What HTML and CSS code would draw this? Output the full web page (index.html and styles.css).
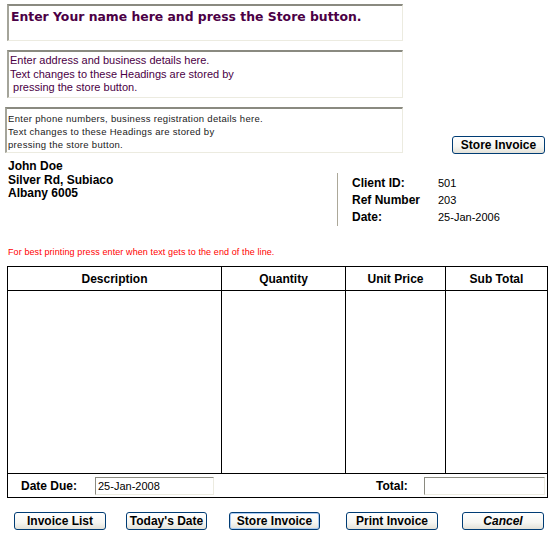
FILE: index.html
```html
<!DOCTYPE html>
<html lang="en">
<head>
    <meta charset="UTF-8">
    <title>Invoice</title>
    <link rel="stylesheet" href="styles.css">
</head>
<body>
    <!-- heading boxes + store button -->
    <div class="top">
        <div class="headings">
            <div class="box box-name">Enter Your name here and press the Store button.</div>
            <div class="box box-address">Enter address and business details here.<br>Text changes to these Headings are stored by<br>&nbsp;pressing the store button.</div>
            <div class="box box-phone">Enter phone numbers, business registration details here.<br>Text changes to these Headings are stored by<br>pressing the store button.</div>
        </div>
        <div class="side">
            <button class="xp-btn store-top">Store Invoice</button>
        </div>
    </div>

    <!-- client details -->
    <div class="details">
        <div class="address">
            <div>John Doe</div>
            <div>Silver Rd, Subiaco</div>
            <div>Albany 6005</div>
        </div>
        <div class="info">
            <div class="info-row"><span class="label">Client ID:</span><span>501</span></div>
            <div class="info-row"><span class="label">Ref Number</span><span>203</span></div>
            <div class="info-row"><span class="label">Date:</span><span>25-Jan-2006</span></div>
        </div>
    </div>

    <div class="note">For best printing press enter when text gets to the end of the line.</div>

    <table class="items">
        <tr class="head">
            <th class="col-desc">Description</th>
            <th class="col-qty">Quantity</th>
            <th class="col-price">Unit Price</th>
            <th class="col-sub">Sub Total</th>
        </tr>
        <tr class="body-row">
            <td></td><td></td><td></td><td></td>
        </tr>
        <tr class="foot">
            <td colspan="4">
                <div class="foot-inner">
                    <span class="foot-label">Date Due:</span>
                    <input class="field due" type="text" value="25-Jan-2008">
                    <span class="foot-label total-label">Total:</span>
                    <input class="field total" type="text" value="">
                </div>
            </td>
        </tr>
    </table>

    <!-- action buttons -->
    <div class="actions">
        <button class="xp-btn w-list">Invoice List</button>
        <button class="xp-btn w-today">Today's Date</button>
        <button class="xp-btn w-store focused">Store Invoice</button>
        <button class="xp-btn w-print">Print Invoice</button>
        <button class="xp-btn w-cancel cancel">Cancel</button>
    </div>
</body>
</html>
```

FILE: styles.css
```css
body {
    margin: 0;
    font-family: 'Liberation Sans', Arial, sans-serif;
    background-color: #ffffff;
    color: #000;
    width: 557px;
}
.top {
    display: flex;
    padding-top: 4px;
}
.headings {
    display: flex;
    flex-direction: column;
    gap: 9px;
    margin-left: 5px;
    width: 398px;
}
.box {
    box-sizing: border-box;
    border-top: 2px solid #8a8a80;
    border-left: 2px solid #a4a49a;
    border-right: 1px solid #ecebe0;
    border-bottom: 1px solid #ecebe0;
    color: #4b0045;
}
.box-name {
    margin-left: 2px;
    width: 396px;
    height: 37px;
    padding: 3px 2px;
    font-family: 'DejaVu Sans', Verdana, sans-serif;
    font-weight: bold;
    font-size: 12.4px;
}
.box-address {
    margin-left: 2px;
    width: 396px;
    height: 48px;
    padding: 2px 1px;
    font-size: 11px;
    line-height: 13.5px;
}
.box-phone {
    width: 398px;
    height: 46px;
    padding: 3px 1px;
    font-size: 9.5px;
    line-height: 13px;
    letter-spacing: 0.3px;
    color: #1a1a1a;
}
.side {
    flex: 1;
    display: flex;
    justify-content: flex-end;
    align-items: flex-end;
    padding-right: 12px;
}
.xp-btn {
    box-sizing: border-box;
    height: 18px;
    padding: 0;
    font-family: 'Liberation Sans', Arial, sans-serif;
    font-weight: bold;
    font-size: 12px;
    color: #000;
    border: 1px solid #003c74;
    border-radius: 3px;
    background: linear-gradient(#ffffff, #f6f6f2 60%, #e3e1d8);
    cursor: pointer;
}
.store-top {
    width: 93px;
    margin-bottom: -1px;
}
.details {
    display: flex;
    padding-top: 7px;
}
.address {
    width: 329px;
    padding-left: 8px;
    font-weight: bold;
    font-size: 12px;
    line-height: 13.5px;
}
.info {
    margin-top: 13px;
    height: 53px;
    border-left: 1px solid #aca899;
    padding-left: 14px;
    padding-top: 1px;
    box-sizing: border-box;
    font-size: 11px;
}
.info-row {
    display: flex;
    height: 17px;
    align-items: center;
}
.label {
    width: 86px;
    font-weight: bold;
    font-size: 12px;
}
.note {
    margin-top: 21px;
    padding-left: 8px;
    font-size: 9px;
    letter-spacing: 0.1px;
    color: #ff0000;
}
.items {
    margin: 9px 0 0 7px;
    width: 541px;
    border-collapse: collapse;
    border: 1px solid #000;
}
.items th {
    height: 23px;
    font-size: 12px;
    font-weight: bold;
    border: 1px solid #000;
    padding: 0;
}
.col-desc { width: 213px; }
.col-qty { width: 123px; }
.col-price { width: 99px; }
.body-row td {
    height: 182px;
    border-left: 1px solid #000;
    border-right: 1px solid #000;
    padding: 0;
}
.foot td {
    height: 23px;
    border-top: 1px solid #000;
    padding: 0;
}
.foot-inner {
    display: flex;
    align-items: center;
}
.foot-label {
    font-weight: bold;
    font-size: 12px;
}
.foot-inner .foot-label:first-child {
    margin-left: 13px;
    width: 74px;
}
.field {
    box-sizing: border-box;
    height: 18px;
    padding: 0 2px;
    font-family: 'Liberation Sans', Arial, sans-serif;
    font-size: 11px;
    border-top: 1px solid #8a8a80;
    border-left: 1px solid #8a8a80;
    border-right: 1px solid #ecebe0;
    border-bottom: 1px solid #ecebe0;
    background: #fff;
}
.due { width: 119px; }
.total-label { margin-left: 162px; width: 48px; }
.total { width: 121px; }
.actions {
    display: flex;
    padding: 14px 0 0 14px;
}
.w-list { width: 92px; }
.w-today { width: 81px; margin-left: 20px; }
.w-store { width: 91px; margin-left: 22px; }
.w-print { width: 92px; margin-left: 26px; }
.w-cancel { width: 82px; margin-left: 24px; }
.focused {
    box-shadow: inset 0 0 0 1px #a9c9f2;
}
.cancel {
    font-style: italic;
}
```
